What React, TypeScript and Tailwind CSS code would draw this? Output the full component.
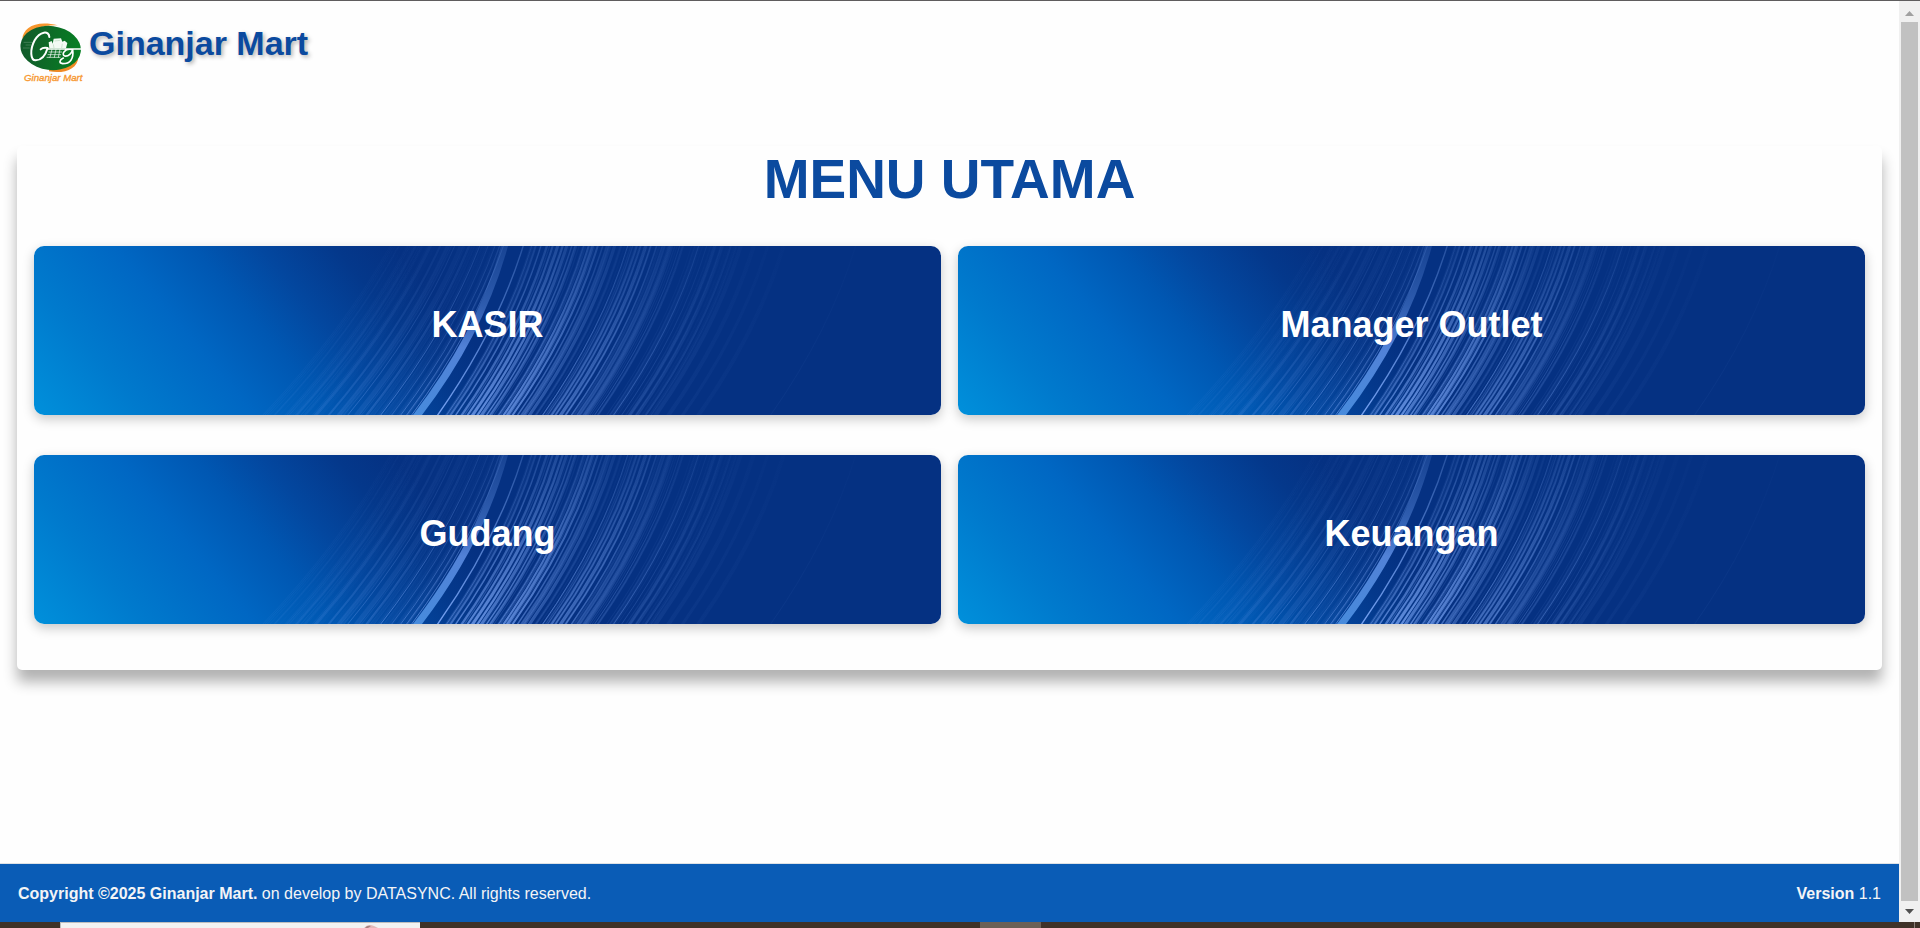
import React, { useId } from "react";

type Streak = [x: number, width: number, opacity: number];

const BAND_HEIGHT = 169;

// Light trails, placed by where they leave the lower edge of the tile.
const MAIN_STREAKS: Streak[] = [
  [262, 2, 0.12], [281, 3, 0.14], [294, 2, 0.2], [304, 4, 0.14], [313, 1, 0.3], [322, 5, 0.12],
  [332, 2, 0.2], [346, 1, 0.5], [357, 1, 0.3], [366, 1, 0.45], [372, 1, 0.4], [403, 1.4, 0.95],
  [412, 1, 0.45], [416, 2, 0.45], [421, 1.4, 0.55], [427, 2, 0.5], [433, 2, 0.7], [438, 3, 0.75],
  [443, 2, 0.75], [447, 3, 0.6], [452, 1.5, 0.65], [456, 3, 0.4], [464, 1, 0.6], [469, 2, 0.7],
  [473, 3, 0.65], [478, 2, 0.7], [483, 1.5, 0.5], [488, 4, 0.35], [495, 3, 0.35], [501, 1, 0.25],
  [508, 1, 0.5], [513, 1, 0.3], [517, 2, 0.5], [521, 1.5, 0.5], [526, 3, 0.4], [531, 2, 0.45],
  [537, 1.5, 0.4], [544, 4, 0.25], [551, 5, 0.22], [560, 1, 0.3], [579, 1, 0.35], [587, 1, 0.2],
  [595, 3, 0.17], [602, 3, 0.14], [611, 2, 0.12], [621, 4, 0.09], [634, 4, 0.06], [648, 3, 0.05],
  [664, 4, 0.04], [736, 1, 0.05],
];

function fineStreaks(): Streak[] {
  let seed = 17;
  const next = () => {
    seed = (seed * 16807) % 2147483647;
    return seed / 2147483647;
  };
  const out: Streak[] = [];
  for (let i = 0; i < 170; i++) {
    const x = 228 + next() * 390;
    if (x > 374 && x < 408) continue;
    const strength = 0.07 + 0.22 * Math.exp(-Math.pow((x - 465) / 80, 2));
    const width = next() > 0.75 ? 3 : 1;
    out.push([Math.round(x * 2) / 2, width, (strength * (0.3 + next() * 0.8)) / Math.sqrt(width)]);
  }
  return out;
}

const STREAKS: Streak[] = [...MAIN_STREAKS, ...fineStreaks()];

function topOf(x: number) {
  return x + 86 + Math.max(0, 405 - x) * 0.24;
}

function bend(x: number) {
  return (x + topOf(x)) / 2 + 17;
}

function trail(x: number) {
  return `M${x} ${BAND_HEIGHT + 1} Q${bend(x)} ${BAND_HEIGHT / 2} ${topOf(x)} -1`;
}

function TileArt() {
  const id = useId();
  return (
    <svg
      aria-hidden="true"
      viewBox="0 0 907 169"
      preserveAspectRatio="none"
      className="absolute inset-0 h-full w-full"
    >
      <defs>
        <linearGradient id={`${id}bg`} gradientUnits="userSpaceOnUse" x1="0" y1="169" x2="296" y2="-77">
          <stop offset="0" stopColor="#0090db" />
          <stop offset="0.22" stopColor="#007acd" />
          <stop offset="0.44" stopColor="#0067c3" />
          <stop offset="0.6" stopColor="#0057b2" />
          <stop offset="0.73" stopColor="#03479f" />
          <stop offset="0.88" stopColor="#04388b" />
          <stop offset="1" stopColor="#053182" />
        </linearGradient>
        <linearGradient id={`${id}ray`} gradientUnits="userSpaceOnUse" x1="0" y1="169" x2="0" y2="0">
          <stop offset="0" stopColor="#7aa5f5" />
          <stop offset="0.45" stopColor="#6f9aea" stopOpacity="0.75" />
          <stop offset="1" stopColor="#5d88d6" stopOpacity="0.38" />
        </linearGradient>
        <linearGradient id={`${id}beam`} gradientUnits="userSpaceOnUse" x1="0" y1="169" x2="0" y2="0">
          <stop offset="0" stopColor="#4f93e4" stopOpacity="0.9" />
          <stop offset="0.4" stopColor="#5a8ae0" stopOpacity="0.9" />
          <stop offset="0.65" stopColor="#4473c6" stopOpacity="0.65" />
          <stop offset="1" stopColor="#3b68b8" stopOpacity="0.35" />
        </linearGradient>
      </defs>
      <rect width="907" height="169" fill={`url(#${id}bg)`} />
      <g fill="none" stroke={`url(#${id}ray)`}>
        {STREAKS.map(([x, width, opacity], i) => (
          <path key={i} d={trail(x)} strokeWidth={width} strokeOpacity={opacity} />
        ))}
      </g>
      <path d="M379 169 Q443 86 467 0 H474 Q450 88 388 169Z" fill={`url(#${id}beam)`} />
      <path d={trail(377)} fill="none" stroke={`url(#${id}ray)`} strokeOpacity="0.6" />
    </svg>
  );
}

function Logo() {
  return (
    <svg viewBox="18 18 192 192" className="h-16 w-16 shrink-0" role="img" aria-label="Ginanjar Mart logo">
      <defs>
        <linearGradient id="logo-green" x1="0" x2="1">
          <stop offset="0" stopColor="#125a2b" />
          <stop offset="0.45" stopColor="#0d6a27" />
          <stop offset="1" stopColor="#068023" />
        </linearGradient>
      </defs>
      <path d="M25 72 C27 38 66 14 132 31 C88 29 50 42 25 72Z" fill="#f7962d" />
      <path d="M105 169 C150 177 192 163 193 125 C180 147 150 165 105 163Z" fill="#f08a24" />
      <ellipse cx="110" cy="99" rx="91" ry="66" transform="rotate(7 110 99)" fill="url(#logo-green)" />
      <g fill="none" stroke="#fff" strokeLinecap="round" strokeLinejoin="round">
        <path
          d="M106 66 C105 46 78 48 62 76 C47 104 49 136 65 136 C83 136 95 119 101 99 C92 97 84 99 80 103"
          strokeWidth="6"
        />
        <path
          d="M101 102 H200 M172 103 C152 100 141 119 152 123 C164 125 173 114 176 104 C180 132 168 146 146 146 C134 144 136 135 148 129"
          strokeWidth="5"
        />
        <path d="M105 111 H143 M102 119 H140 M99 127 H138 M114 103 L108 127 M126 103 L121 127 M138 103 L133 127" strokeWidth="2" />
        <path d="M30 82 H54 M36 90 H50 M28 99 H46" strokeWidth="1" strokeOpacity="0.6" />
      </g>
      <path d="M106 100 L104 82 L113 78 L116 86 L119 71 L141 70 L145 80 L152 77 L160 84 L156 100Z" fill="#f3faf4" />
      <path d="M122 78 L138 76 M118 88 L120 99 M145 86 L143 99" stroke="#b9d8be" strokeWidth="2" fill="none" />
      <text
        x="30"
        y="198"
        fill="#f7962d"
        stroke="#f7962d"
        strokeWidth="1"
        fontSize="29"
        fontStyle="italic"
        fontFamily="'Comic Sans MS', 'Liberation Sans', cursive"
      >
        Ginanjar Mart
      </text>
    </svg>
  );
}

const MENU = [
  { label: "KASIR", href: "#kasir" },
  { label: "Manager Outlet", href: "#manager-outlet" },
  { label: "Gudang", href: "#gudang" },
  { label: "Keuangan", href: "#keuangan" },
];

function MenuTile({ label, href }: { label: string; href: string }) {
  return (
    <a
      href={href}
      className="relative flex h-[169px] items-center justify-center overflow-hidden rounded-[10px] pb-3 shadow-[0_4px_12px_rgba(0,0,0,0.22)]"
    >
      <TileArt />
      <span className="relative text-4xl font-bold text-white">{label}</span>
    </a>
  );
}

function ScrollRail() {
  return (
    <div className="flex w-[21px] shrink-0 flex-col bg-[#f0f0f0]">
      <button type="button" aria-label="Scroll up" className="flex h-[21px] items-center justify-center pt-1">
        <svg viewBox="0 0 9 5" className="h-[5px] w-[9px]" fill="#a0a0a0">
          <path d="M4.500 0 L9 5 H0Z" />
        </svg>
      </button>
      <div className="mx-[2px] flex-1 bg-[#c1c1c1]" />
      <button type="button" aria-label="Scroll down" className="flex h-[21px] items-center justify-center">
        <svg viewBox="0 0 9 5" className="h-[5px] w-[9px]" fill="#505050">
          <path d="M0 0 H9 L4.500 5Z" />
        </svg>
      </button>
    </div>
  );
}

export default function App() {
  return (
    <div className="flex min-h-screen flex-col border-t border-[#5f5d5e] bg-[#fefefe] font-['Liberation_Sans',Arial,sans-serif]">
      <div className="flex flex-1">
        <div className="flex min-w-0 flex-1 flex-col">
          <header className="flex h-[145px] items-start gap-[5px] px-5 pt-5">
            <Logo />
            <span className="pt-[2px] text-[34px] leading-10 font-bold text-[#0b4a9f] [text-shadow:2px_2px_4px_rgba(0,0,0,0.3)]">
              Ginanjar Mart
            </span>
          </header>

          <main className="flex-1">
            <section className="mx-[17px] rounded-[5px] bg-[#fefefe] px-[17px] pb-[46px] shadow-[0_12px_14px_rgba(0,0,0,0.3)]">
              <h1 className="mb-[33px] text-center text-[55px] leading-[67px] font-bold text-[#0b4a9f]">
                MENU UTAMA
              </h1>
              <nav className="grid grid-cols-2 gap-x-[17px] gap-y-10" aria-label="Menu utama">
                {MENU.map((item) => (
                  <MenuTile key={item.href} {...item} />
                ))}
              </nav>
            </section>
          </main>

          <footer className="flex h-[59px] items-center justify-between border-t border-[#dee2e6] bg-[#0a5cb6] px-[18px] pt-[2px] text-base text-[#f3f4f6]">
            <p>
              <strong>Copyright ©2025 Ginanjar Mart.</strong> on develop by DATASYNC. All rights reserved.
            </p>
            <p>
              <strong>Version</strong> 1.1
            </p>
          </footer>
        </div>
        <ScrollRail />
      </div>

      <div className="flex h-[6px] overflow-hidden bg-[#3f3228]" aria-hidden="true">
        <div className="ml-[60px] w-[360px] border-t border-l border-[#bdbdbd] bg-[#f2f2f2]">
          <svg viewBox="0 0 20 5" className="ml-[302px] h-[5px] w-5">
            <path d="M1 5 Q5 0 11 3 L15 5Z" fill="#e3b9b9" />
            <path d="M2 5 Q4 2 8 3 L5 5Z" fill="#a98080" />
          </svg>
        </div>
        <div className="ml-[560px] w-[61px] bg-[#6b6056]" />
        <div className="mr-[5px] ml-auto w-px bg-[#8a8079]" />
      </div>
    </div>
  );
}
